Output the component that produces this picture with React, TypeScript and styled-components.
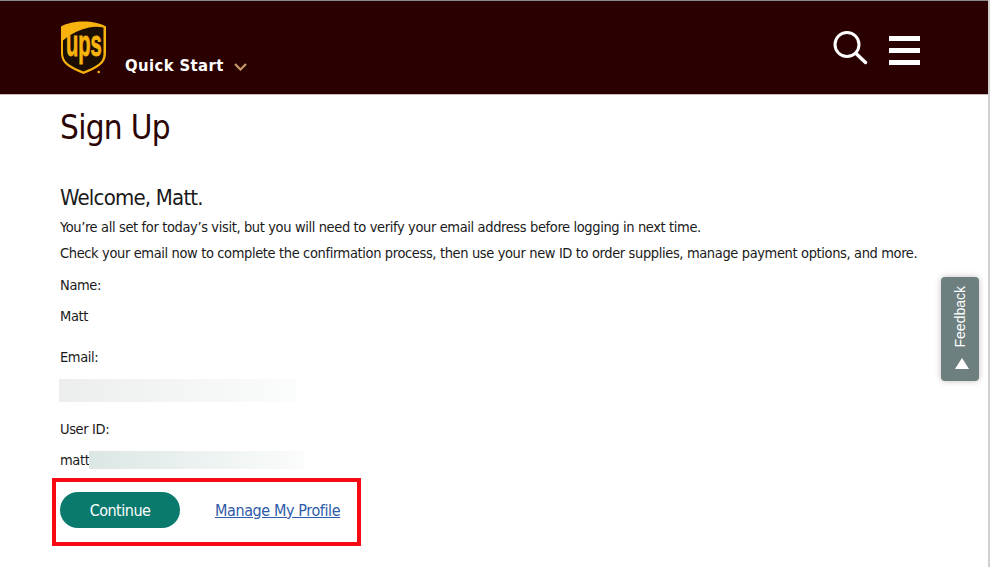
import styled, { createGlobalStyle } from 'styled-components'

const GlobalStyle = createGlobalStyle`
  html, body {
    margin: 0;
    padding: 0;
    background: #fff;
  }
  body {
    font-family: 'DejaVu Sans', Tahoma, sans-serif;
    font-stretch: condensed;
    color: #1a1a1a;
  }
`

const Logo = () => (
  <svg width='48' height='56' viewBox='0 0 48 56' aria-label='UPS'>
    <path
      d='M23.500 0.500C15 0.500 7 2 1 5.500V32c0 5.500 2 9.500 6 12.500 4.500 3.500 11 6.500 16.500 8.500 5.500-2 12-5 16.500-8.500 4-3 6-7 6-12.500V5.500C40 2 32 0.500 23.500 0.500Z'
      fill='#f8b30f'
    />
    <path
      d='M43.500 6.500C36 4.800 29 5.800 22 8.500 14 11.500 8 15 3 19.500V32c0 4.500 1.500 7.500 5 10.500 4 3 10 6 15.500 8 5.500-2 11.500-5 15.500-8 3.500-3 4.500-6 4.500-10.500Z'
      fill='#1d0e04'
    />
    <UpsMark transform='translate(6 35) scale(0.545 1)'>ups</UpsMark>
    <circle cx='38.700' cy='51' r='1.300' fill='#f8b30f' />
  </svg>
)

const SearchIcon = () => (
  <svg width='36' height='36' viewBox='0 0 36 36' fill='none' stroke='#fff' strokeWidth='3' strokeLinecap='round'>
    <circle cx='14' cy='14.500' r='12' />
    <path d='M23 23.500L32.500 32.500' strokeWidth='3.500' />
  </svg>
)

const App = () => {
  return (
    <Page>
      <GlobalStyle />
      <Header>
        <Brand>
          <Logo />
          <MenuLabel>
            Quick Start
            <svg width='13' height='8' viewBox='0 0 13 8' fill='none' stroke='#c8996a' strokeWidth='2.200'>
              <path d='M1 1L6.500 6.500L12 1' />
            </svg>
          </MenuLabel>
        </Brand>
        <HeaderTools>
          <SearchIcon />
          <Burger>
            <span />
            <span />
            <span />
          </Burger>
        </HeaderTools>
      </Header>
      <Main>
        <Title>Sign Up</Title>
        <Welcome>Welcome, Matt.</Welcome>
        <Para $top={6}>You’re all set for today’s visit, but you will need to verify your email address before logging in next time.</Para>
        <Para $top={8}>Check your email now to complete the confirmation process, then use your new ID to order supplies, manage payment options, and more.</Para>
        <Para $top={14}>Name:</Para>
        <Para $top={13}>Matt</Para>
        <Para $top={23}>Email:</Para>
        <BlurBar $width={237} $tint='#eceeed' />
        <Para $top={18}>User ID:</Para>
        <ValueRow>
          matt
          <BlurBar $width={215} $tint='#dbe7e5' $inline />
        </ValueRow>
        <Actions>
          <PrimaryButton>Continue</PrimaryButton>
          <ProfileLink href='#'>Manage My Profile</ProfileLink>
        </Actions>
      </Main>
      <FeedbackTab>
        <FeedbackText>Feedback</FeedbackText>
        <Triangle />
      </FeedbackTab>
    </Page>
  )
}

const Page = styled.div`
  position: relative;
  box-sizing: border-box;
  width: 990px;
  height: 567px;
  overflow: hidden;
  background: #fff;
  border-right: 2px solid #d2cfcd;
`

const Header = styled.header`
  display: flex;
  justify-content: space-between;
  align-items: flex-start;
  box-sizing: border-box;
  height: 95px;
  padding: 20px 68px 0 60px;
  background: #2b0000;
  border-top: 1px solid #8d8a8e;
  border-bottom: 1px solid #c9bcb8;
`

const Brand = styled.div`
  display: flex;
  align-items: flex-start;
  gap: 17px;
`

const UpsMark = styled.text`
  font-family: 'Liberation Sans', Arial, sans-serif;
  font-stretch: normal;
  font-size: 37px;
  font-weight: 700;
  fill: #f8b30f;
  stroke: #f8b30f;
  stroke-width: 0.800px;
`

const MenuLabel = styled.div`
  display: flex;
  align-items: center;
  gap: 10px;
  margin-top: 35px;
  font-size: 16.500px;
  font-weight: 700;
  letter-spacing: 0.400px;
  color: #fff;
  white-space: nowrap;
  svg {
    margin-top: 3px;
  }
`

const HeaderTools = styled.div`
  display: flex;
  align-items: flex-start;
  gap: 20px;
  margin-top: 9px;
`

const Burger = styled.div`
  display: flex;
  flex-direction: column;
  gap: 7.500px;
  width: 31px;
  margin-top: 6px;
  span {
    height: 4.500px;
    background: #fff;
  }
`

const Main = styled.main`
  padding: 13px 0 0 60px;
`

const Title = styled.h1`
  margin: 0 0 36px;
  font-size: 33px;
  line-height: 40px;
  font-weight: 400;
  letter-spacing: -0.700px;
  color: #2b0505;
`

const Welcome = styled.h2`
  margin: 0;
  font-size: 22px;
  line-height: 28px;
  font-weight: 400;
  letter-spacing: -0.800px;
`

const Para = styled.p<{ $top: number }>`
  margin: ${p => p.$top}px 0 0;
  font-size: 14.500px;
  line-height: 18px;
  letter-spacing: -0.370px;
  white-space: nowrap;
`

const BlurBar = styled.div<{ $width: number; $tint: string; $inline?: boolean }>`
  width: ${p => p.$width}px;
  height: ${p => (p.$inline ? 18 : 23)}px;
  margin: ${p => (p.$inline ? '0' : '13px 0 0 -1px')};
  background: linear-gradient(90deg, ${p => p.$tint}, #fbfcfc);
`

const ValueRow = styled.div`
  display: flex;
  align-items: center;
  margin-top: 13px;
  font-size: 14.500px;
  line-height: 18px;
  letter-spacing: -0.370px;
`

const Actions = styled.div`
  display: flex;
  align-items: center;
  gap: 35px;
  box-sizing: border-box;
  width: 309px;
  height: 68px;
  margin: 9px 0 0 -8px;
  padding: 0 0 4px 4px;
  border: 4px solid #f80a14;
`

const PrimaryButton = styled.button`
  width: 120px;
  height: 36px;
  border: 0;
  border-radius: 18px;
  background: #0a7a6e;
  color: #fff;
  font: inherit;
  font-size: 16px;
  letter-spacing: -0.500px;
`

const ProfileLink = styled.a`
  font-size: 16px;
  letter-spacing: -0.400px;
  color: #2f5ba8;
  text-decoration: underline;
`

const FeedbackTab = styled.div`
  position: absolute;
  top: 277px;
  left: 941px;
  display: flex;
  flex-direction: column;
  align-items: center;
  box-sizing: border-box;
  width: 38px;
  height: 104px;
  padding-top: 9px;
  border-radius: 4px;
  background: #6e7f7f;
  box-shadow: 0 0 6px rgba(0, 0, 0, 0.25);
`

const FeedbackText = styled.span`
  writing-mode: vertical-rl;
  transform: rotate(180deg);
  font-family: 'Liberation Sans', Arial, sans-serif;
  font-stretch: normal;
  font-size: 14px;
  color: #fff;
`

const Triangle = styled.span`
  margin: 11px 0 0 3px;
  border-left: 7px solid transparent;
  border-right: 7px solid transparent;
  border-bottom: 11px solid #fff;
`

export default App
